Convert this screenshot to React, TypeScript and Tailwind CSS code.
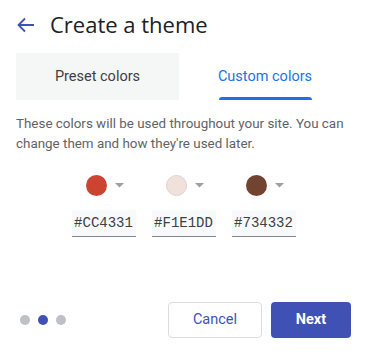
import React from 'react';

const COLORS = [
  { hex: '#CC4331', border: false },
  { hex: '#F1E1DD', border: true },
  { hex: '#734332', border: false },
];

const ColorPick = ({ hex, border }: { hex: string; border: boolean }) => (
  <div className="flex w-[64px] flex-col items-center">
    <div className="flex h-[22px] items-center gap-[8px] pl-[2px]">
      <div
        className={`h-[21px] w-[21px] rounded-full ${border ? 'border border-[#dcd3d1]' : ''}`}
        style={{ backgroundColor: hex }}
      />
      <svg width="9" height="5" viewBox="0 0 9 5">
        <path d="M0 0 L9 0 L4.5 4.5 Z" fill="#9aa0a6" />
      </svg>
    </div>
    <div className="mt-[14px] flex h-[27px] w-[64px] items-center justify-center border-b border-[#80868b] bg-[#f8f9fa] font-['Liberation_Mono',monospace] text-[14px] text-[#3c4043]">
      {hex}
    </div>
  </div>
);

export default function App() {
  return (
    <div className="h-[359px] w-[367px] bg-white px-[16px] font-['Roboto',sans-serif]">
      <div className="flex h-[48px] items-center pt-[1px]">
        <svg width="18" height="16" viewBox="0 0 18 16" className="ml-[1px]">
          <path d="M17 8 H2 M8 1.5 L1.5 8 L8 14.5" stroke="#3f51b5" strokeWidth="1.8" fill="none" />
        </svg>
        <div className="ml-[15px] font-['Open_Sans',sans-serif] text-[22px] text-[#202124]">Create a theme</div>
      </div>

      <div className="mt-[5px] flex h-[47px]">
        <div className="flex w-[163px] items-center justify-center bg-[#f5f7f7] text-[14.5px] text-[#3c4043]">
          Preset colors
        </div>
        <div className="relative flex flex-1 items-center justify-center text-[14.5px] text-[#1a73e8]">
          Custom colors
          <div className="absolute bottom-0 left-[40px] h-[3px] w-[93px] rounded-t-[3px] bg-[#1a73e8]" />
        </div>
      </div>

      <p className="mt-[14px] text-[13.4px] leading-[20px] text-[#5f6368]">
        These colors will be used throughout your site. You can change them and how they're used later.
      </p>

      <div className="mt-[20px] flex justify-center gap-[16px]">
        {COLORS.map((c) => (
          <ColorPick key={c.hex} hex={c.hex} border={c.border} />
        ))}
      </div>

      <div className="mt-[65px] flex items-center justify-between">
        <div className="flex gap-[8px] pl-[4px]">
          <div className="h-[10px] w-[10px] rounded-full bg-[#bdc1c6]" />
          <div className="h-[10px] w-[10px] rounded-full bg-[#3f51b5]" />
          <div className="h-[10px] w-[10px] rounded-full bg-[#bdc1c6]" />
        </div>
        <div className="flex gap-[9px]">
          <button className="h-[36px] w-[94px] rounded-[4px] border border-[#dadce0] bg-white text-[14.5px] text-[#3f51b5]">
            Cancel
          </button>
          <button className="h-[36px] w-[80px] rounded-[4px] bg-[#3f51b5] text-[14.5px] font-bold text-white">
            Next
          </button>
        </div>
      </div>
    </div>
  );
}
